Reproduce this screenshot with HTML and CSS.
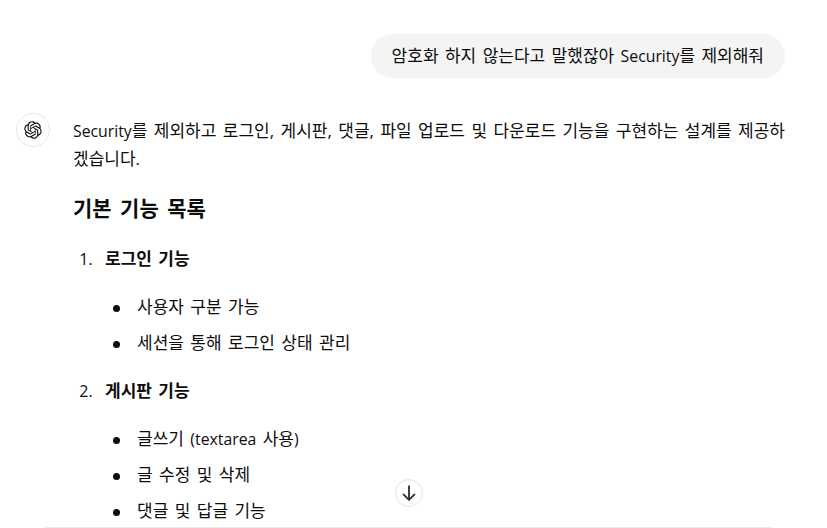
FILE: index.html
```html
<!DOCTYPE html>
<html lang="ko">
<head>
    <meta charset="UTF-8">
    <meta name="viewport" content="width=device-width, initial-scale=1.0">
    <title>대화</title>
    <link rel="stylesheet" href="styles.css">
</head>
<body>
    <main class="thread">
        <div class="user-row">
            <div class="bubble">암호화 하지 않는다고 말했잖아 <span class="en">Security</span>를 제외해줘</div>
        </div>

        <div class="reply">
            <div class="avatar">
                <svg viewBox="0 0 41 41" width="18" height="18" fill="currentColor">
                    <path d="M37.5324 16.8707C37.9808 15.5241 38.1363 14.0974 37.9886 12.6859C37.8409 11.2744 37.3934 9.91076 36.676 8.68622C35.6126 6.83404 33.9882 5.3676 32.0373 4.4985C30.0864 3.62941 27.9098 3.40259 25.8215 3.85078C24.8796 2.7893 23.7219 1.94125 22.4257 1.36341C21.1295 0.785575 19.7249 0.491269 18.3058 0.500197C16.1708 0.495044 14.0893 1.16803 12.3614 2.42214C10.6335 3.67624 9.34853 5.44666 8.6917 7.47815C7.30085 7.76286 5.98686 8.3414 4.8377 9.17505C3.68854 10.0087 2.73073 11.0782 2.02839 12.312C0.956464 14.1591 0.498905 16.2988 0.721698 18.4228C0.944492 20.5467 1.83612 22.5449 3.268 24.1293C2.81966 25.4759 2.66413 26.9026 2.81182 28.3141C2.95951 29.7256 3.40701 31.0892 4.12437 32.3138C5.18791 34.1659 6.8123 35.6322 8.76321 36.5013C10.7141 37.3704 12.8907 37.5973 14.9789 37.1492C15.9208 38.2107 17.0786 39.0587 18.3747 39.6366C19.6709 40.2144 21.0755 40.5087 22.4946 40.4998C24.6307 40.5054 26.7133 39.8321 28.4418 38.5772C30.1704 37.3223 31.4556 35.5506 32.1119 33.5179C33.5027 33.2332 34.8167 32.6547 35.9659 31.821C37.115 30.9874 38.0728 29.9178 38.7752 28.684C39.8458 26.8371 40.3023 24.6979 40.0789 22.5748C39.8556 20.4517 38.9639 18.4544 37.5324 16.8707ZM22.4978 37.8849C20.7443 37.8874 19.0459 37.2733 17.6994 36.1501C17.7601 36.117 17.8666 36.0586 17.936 36.0161L25.9004 31.4156C26.1003 31.3019 26.2663 31.137 26.3813 30.9378C26.4964 30.7386 26.5563 30.5124 26.5549 30.2825V19.0542L29.9213 20.998C29.9389 21.0068 29.9541 21.0198 29.9656 21.0359C29.977 21.052 29.9842 21.0707 29.9867 21.0902V30.3889C29.9842 32.375 29.1946 34.2791 27.7909 35.6841C26.3872 37.0892 24.4838 37.8806 22.4978 37.8849ZM6.39227 31.0064C5.51397 29.4888 5.19742 27.7107 5.49804 25.9832C5.55718 26.0187 5.66048 26.0818 5.73461 26.1244L13.699 30.7248C13.8975 30.8408 14.1233 30.902 14.3532 30.902C14.583 30.902 14.8088 30.8408 15.0073 30.7248L24.731 25.1103V28.9979C24.7321 29.0177 24.7283 29.0376 24.7199 29.0556C24.7115 29.0736 24.6988 29.0893 24.6829 29.1012L16.6317 33.7497C14.9096 34.7416 12.8643 35.0097 10.9447 34.4954C9.02506 33.9811 7.38785 32.7263 6.39227 31.0064ZM4.29707 13.6194C5.17156 12.0998 6.55279 10.9364 8.19885 10.3327C8.19885 10.4013 8.19491 10.5228 8.19491 10.6071V19.808C8.19351 20.0378 8.25334 20.2638 8.36823 20.4629C8.48312 20.6619 8.64893 20.8267 8.84863 20.9404L18.5723 26.5542L15.206 28.4979C15.1894 28.5089 15.1703 28.5155 15.1505 28.5173C15.1307 28.5191 15.1107 28.516 15.0924 28.5082L7.04046 23.8557C5.32135 22.8601 4.06716 21.2235 3.55289 19.3046C3.03862 17.3858 3.30624 15.3413 4.29707 13.6194ZM31.955 20.0556L22.2312 14.4411L25.5976 12.4981C25.6142 12.4872 25.6333 12.4805 25.6531 12.4787C25.6729 12.4769 25.6928 12.4801 25.7111 12.4879L33.7631 17.1364C34.9967 17.849 36.0017 18.8982 36.6606 20.1613C37.3194 21.4244 37.6047 22.849 37.4832 24.2684C37.3617 25.6878 36.8382 27.0432 35.9743 28.1759C35.1103 29.3086 33.9415 30.1717 32.6047 30.6641C32.6047 30.5947 32.6047 30.4733 32.6047 30.3889V21.188C32.6066 20.9586 32.5474 20.7328 32.4332 20.5338C32.319 20.3348 32.154 20.1698 31.955 20.0556ZM35.3055 15.0128C35.2464 14.9765 35.1431 14.9142 35.069 14.8717L27.1045 10.2712C26.906 10.1554 26.6803 10.0943 26.4504 10.0943C26.2206 10.0943 25.9948 10.1554 25.7963 10.2712L16.0726 15.8858V11.9982C16.0715 11.9783 16.0753 11.9585 16.0837 11.9405C16.0921 11.9225 16.1048 11.9068 16.1207 11.8949L24.1719 7.25025C25.4053 6.53903 26.8158 6.19376 28.2383 6.25482C29.6608 6.31589 31.0364 6.78077 32.2044 7.59508C33.3723 8.40939 34.2842 9.53945 34.8334 10.8531C35.3826 12.1667 35.5464 13.6095 35.3055 15.0128ZM14.2424 21.9419L10.8752 19.9981C10.8576 19.9893 10.8423 19.9763 10.8309 19.9602C10.8195 19.9441 10.8122 19.9254 10.8098 19.9058V10.6071C10.8107 9.18295 11.2173 7.78848 11.9819 6.58696C12.7466 5.38544 13.8377 4.42659 15.1275 3.82264C16.4173 3.21869 17.8524 2.99464 19.2649 3.1767C20.6775 3.35876 22.0089 3.93941 23.1034 4.85067C23.0427 4.88379 22.937 4.94215 22.8668 4.98473L14.9024 9.58517C14.7025 9.69878 14.5366 9.86356 14.4215 10.0626C14.3065 10.2616 14.2466 10.4877 14.2479 10.7175L14.2424 21.9419ZM16.071 17.9991L20.4018 15.4978L24.7325 17.9975V22.9985L20.4018 25.4983L16.071 22.9985V17.9991Z"/>
                </svg>
            </div>
            <div class="content">
                <p><span class="en">Security</span>를 제외하고 로그인, 게시판, 댓글, 파일 업로드 및 다운로드 기능을 구현하는 설계를 제공하겠습니다.</p>
                <h3>기본 기능 목록</h3>
                <ol>
                    <li>
                        <p><strong>로그인 기능</strong></p>
                        <ul>
                            <li>사용자 구분 가능</li>
                            <li>세션을 통해 로그인 상태 관리</li>
                        </ul>
                    </li>
                    <li>
                        <p><strong>게시판 기능</strong></p>
                        <ul>
                            <li>글쓰기 <span class="en">(textarea</span> 사용<span class="en">)</span></li>
                            <li>글 수정 및 삭제</li>
                            <li>댓글 및 답글 기능</li>
                        </ul>
                    </li>
                </ol>
            </div>
        </div>
    </main>

    <button class="scroll-down" type="button" aria-label="맨 아래로">
        <svg viewBox="0 0 24 24" width="22" height="22" fill="none" stroke="currentColor" stroke-width="2" stroke-linecap="round" stroke-linejoin="round">
            <path d="M12 4.5v15M6 13.5l6 6 6-6"/>
        </svg>
    </button>
    <div class="composer-line"></div>
</body>
</html>
```

FILE: styles.css
```css
html, body {
    height: 100%;
}
body {
    margin: 0;
    overflow: hidden;
    background: #fff;
    color: #0d0d0d;
    font-family: "Open Sans", "Noto Sans CJK KR", sans-serif;
    font-size: 17px;
    line-height: 28px;
    word-spacing: 2px;
}
.en {
    font-size: 15.8px;
    word-spacing: 0;
}
.thread {
    padding: 34px 42px 0 16px;
}
.user-row {
    display: flex;
    justify-content: flex-end;
}
.bubble {
    padding: 8px 21px;
    background: #f4f4f4;
    border-radius: 22px;
}
.reply {
    display: flex;
    gap: 23px;
    margin-top: 35px;
}
.avatar {
    flex: none;
    display: flex;
    align-items: center;
    justify-content: center;
    width: 32px;
    height: 32px;
    border: 1px solid #e6e6e6;
    border-radius: 50%;
}
.content {
    flex: 1;
    min-width: 0;
    padding-top: 4px;
}
.content p {
    margin: 0;
}
.content h3 {
    margin: 19px 0 0;
    font-size: 21px;
    line-height: 32px;
    font-weight: 600;
    word-spacing: 3px;
}
.content strong {
    font-weight: 600;
}
.content ol {
    margin: 21px 0 0;
    padding-left: 32px;
}
.content ol > li {
    margin-bottom: 20px;
}
.content ol > li::marker {
    content: counter(list-item) ".\00a0\00a0";
    font-size: 16px;
}
.content ul {
    margin: 20px 0 0;
    padding-left: 32px;
    list-style: none;
}
.content ul li {
    position: relative;
    margin-bottom: 8px;
}
.content ul li::before {
    content: "";
    position: absolute;
    left: -24px;
    top: 12px;
    width: 7px;
    height: 7px;
    border-radius: 50%;
    background: #0d0d0d;
}
.scroll-down {
    position: absolute;
    left: 395px;
    top: 479px;
    display: flex;
    align-items: center;
    justify-content: center;
    width: 28px;
    height: 28px;
    padding: 0;
    border: 1px solid #e3e3e3;
    border-radius: 50%;
    background: #fff;
    color: #2f2f2f;
}
.composer-line {
    position: absolute;
    left: 45px;
    bottom: 0;
    width: 728px;
    height: 1px;
    background: #ececec;
}
```
